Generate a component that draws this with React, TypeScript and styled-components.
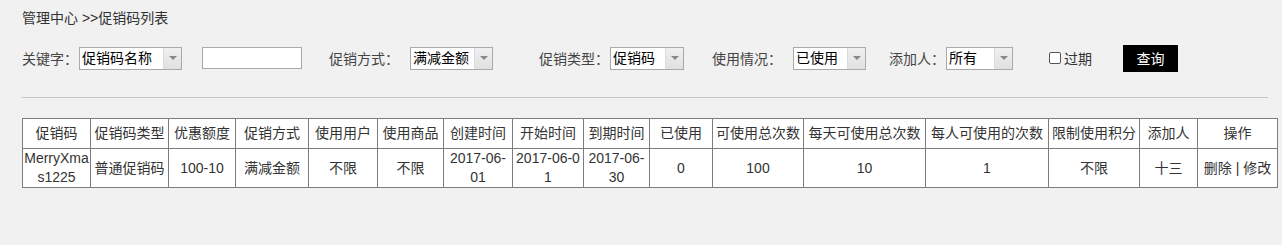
import React from 'react'
import styled, { createGlobalStyle } from 'styled-components'

const GlobalStyle = createGlobalStyle`
  html, body {
    margin: 0;
    padding: 0;
    background: #f1f1f1;
  }
  body {
    font-family: "Liberation Sans", "Noto Sans CJK SC", sans-serif;
    font-size: 14px;
    color: #333;
  }
`

const Page = styled.div`
  padding: 8px 5px 0 22px;
  width: 1282px;
  box-sizing: border-box;
`

const Crumb = styled.div`
  height: 20px;
  line-height: 20px;
  font-size: 14px;
  color: #333;
`

const FilterBar = styled.div`
  display: flex;
  align-items: center;
  height: 28px;
  margin-top: 16px;
`

const Label = styled.span<{ $ml?: number }>`
  margin-left: ${p => p.$ml || 0}px;
  white-space: nowrap;
  color: #444;
`

const SelectBox = styled.div<{ $w: number; $ml?: number }>`
  display: flex;
  width: ${p => p.$w}px;
  height: 23px;
  margin-left: ${p => p.$ml || 0}px;
  box-sizing: border-box;
  border: 1px solid #a9a9a9;
  background: #fff;
`

const SelectText = styled.span`
  flex: 1;
  padding-left: 2px;
  line-height: 21px;
  color: #000;
  white-space: nowrap;
  overflow: hidden;
`

const Arrow = styled.span`
  width: 17px;
  display: flex;
  align-items: center;
  justify-content: center;
  background: linear-gradient(#f0f0f0, #e0e0e0);
  border-left: 1px solid #dcdcdc;
  &::after {
    content: '';
    border-left: 4px solid transparent;
    border-right: 4px solid transparent;
    border-top: 4px solid #888;
  }
`

const TextInput = styled.input<{ $ml?: number }>`
  width: 100px;
  height: 22px;
  margin: 0 0 0 ${p => p.$ml || 0}px;
  box-sizing: border-box;
  border: 1px solid #a9a9a9;
  background: #fff;
  padding: 0 2px;
`

const CheckLabel = styled.label<{ $ml?: number }>`
  display: flex;
  align-items: center;
  margin-left: ${p => p.$ml || 0}px;
  color: #333;
`

const Check = styled.span`
  width: 10px;
  height: 10px;
  border: 1px solid #555;
  border-radius: 2px;
  background: #fff;
  margin-right: 3px;
`

const QueryButton = styled.button<{ $ml?: number }>`
  margin-left: ${p => p.$ml || 0}px;
  width: 55px;
  height: 27px;
  border: none;
  background: #000;
  color: #fff;
  font-family: inherit;
  font-size: 14px;
  padding: 0;
`

const Rule = styled.div`
  width: 1246px;
  height: 0;
  border-top: 1px solid #c6c6c6;
  margin-top: 25px;
`

const Table = styled.table`
  margin-top: 20px;
  width: 1255px;
  table-layout: fixed;
  border-collapse: collapse;
  background: #fff;
`

const Th = styled.th`
  height: 29px;
  padding: 0 1px;
  border: 1px solid #7d7d7d;
  font-weight: normal;
  color: #333;
  line-height: 19px;
  white-space: nowrap;
  overflow: hidden;
`

const Td = styled.td<{ $tight?: boolean }>`
  height: 37px;
  padding: 0 ${p => (p.$tight ? 1 : 3)}px;
  border: 1px solid #7d7d7d;
  text-align: center;
  color: #333;
  line-height: 19px;
  word-break: break-all;
`

const columns: [string, number][] = [
  ['促销码', 68],
  ['促销码类型', 78],
  ['优惠额度', 67],
  ['促销方式', 73],
  ['使用用户', 69],
  ['使用商品', 66],
  ['创建时间', 69],
  ['开始时间', 71],
  ['到期时间', 66],
  ['已使用', 63],
  ['可使用总次数', 91],
  ['每天可使用总次数', 122],
  ['每人可使用的次数', 123],
  ['限制使用积分', 91],
  ['添加人', 58],
  ['操作', 80],
]

const row = [
  'MerryXmas1225',
  '普通促销码',
  '100-10',
  '满减金额',
  '不限',
  '不限',
  '2017-06-01',
  '2017-06-01',
  '2017-06-30',
  '0',
  '100',
  '10',
  '1',
  '不限',
  '十三',
  '删除 | 修改',
]

const FakeSelect = ({ w, ml, text }: { w: number; ml?: number; text: string }) => (
  <SelectBox $w={w} $ml={ml}>
    <SelectText>{text}</SelectText>
    <Arrow />
  </SelectBox>
)

const App = () => (
  <Page>
    <GlobalStyle />
    <Crumb>管理中心 &gt;&gt;促销码列表</Crumb>
    <FilterBar>
      <Label>关键字：</Label>
      <FakeSelect w={103} ml={1} text="促销码名称" />
      <TextInput $ml={20} />
      <Label $ml={27}>促销方式：</Label>
      <FakeSelect w={83} ml={11} text="满减金额" />
      <Label $ml={46}>促销类型：</Label>
      <FakeSelect w={74} ml={1} text="促销码" />
      <Label $ml={28}>使用情况：</Label>
      <FakeSelect w={73} ml={11} text="已使用" />
      <Label $ml={23}>添加人：</Label>
      <FakeSelect w={67} ml={1} text="所有" />
      <CheckLabel $ml={36}>
        <Check />
        过期
      </CheckLabel>
      <QueryButton $ml={31}>查询</QueryButton>
    </FilterBar>
    <Rule />
    <Table>
      <colgroup>
        {columns.map(([name, w]) => (
          <col key={name} style={{ width: w }} />
        ))}
      </colgroup>
      <thead>
        <tr>
          {columns.map(([name]) => (
            <Th key={name}>{name}</Th>
          ))}
        </tr>
      </thead>
      <tbody>
        <tr>
          {row.map((v, i) => (
            <Td key={i} $tight={i === 0}>
              {v}
            </Td>
          ))}
        </tr>
      </tbody>
    </Table>
  </Page>
)

export default App
